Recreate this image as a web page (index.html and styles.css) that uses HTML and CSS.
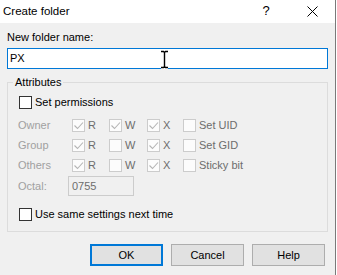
FILE: index.html
```html
<!DOCTYPE html>
<html lang="en">

<head>
    <meta charset="UTF-8">
    <meta name="viewport" content="width=device-width, initial-scale=1.0">
    <title>Create folder</title>
    <link rel="stylesheet" href="styles.css">
</head>

<body>
    <div class="window">
        <div class="titlebar">
            <span class="title">Create folder</span>
            <span class="caption-btn help-btn">?</span>
            <span class="caption-btn close-btn">
                <svg width="11" height="11" viewBox="0 0 11 11">
                    <path d="M0.5 0.5L10.5 10.5M10.5 0.5L0.5 10.5" stroke="#000" stroke-width="1" fill="none" />
                </svg>
            </span>
        </div>

        <div class="content">
            <div class="name-label">New folder name:</div>
            <div class="name-field">
                <div class="textbox">PX</div>
                <!-- mouse cursor over the text box -->
                <svg class="ibeam" width="9" height="19" viewBox="0 0 9 19">
                    <path d="M1 1.5h2.5l1 1 1-1H8M4.5 2.5v14M1 17.5h2.5l1-1 1 1H8" stroke="#fff" stroke-width="3" fill="none" />
                    <path d="M1 1.5h2.5l1 1 1-1H8M4.5 2.5v14M1 17.5h2.5l1-1 1 1H8" stroke="#000" stroke-width="1.4" fill="none" />
                </svg>
            </div>

            <fieldset class="group">
                <legend>Attributes</legend>

                <div class="check-row perms">
                    <span class="box"></span>Set permissions
                </div>

                <div class="perm-grid">
                    <span class="dim">Owner</span>
                    <span class="cb"><span class="box off on"></span>R</span>
                    <span class="cb"><span class="box off on"></span>W</span>
                    <span class="cb"><span class="box off on"></span>X</span>
                    <span class="cb"><span class="box off"></span>Set UID</span>

                    <span class="dim">Group</span>
                    <span class="cb"><span class="box off on"></span>R</span>
                    <span class="cb"><span class="box off"></span>W</span>
                    <span class="cb"><span class="box off on"></span>X</span>
                    <span class="cb"><span class="box off"></span>Set GID</span>

                    <span class="dim">Others</span>
                    <span class="cb"><span class="box off on"></span>R</span>
                    <span class="cb"><span class="box off"></span>W</span>
                    <span class="cb"><span class="box off on"></span>X</span>
                    <span class="cb"><span class="box off"></span>Sticky bit</span>
                </div>

                <div class="octal-row">
                    <span class="dim octal-label">Octal:</span>
                    <div class="octal">0755</div>
                </div>

                <div class="check-row same">
                    <span class="box"></span>Use same settings next time
                </div>
            </fieldset>

            <div class="buttons">
                <button class="btn default">OK</button>
                <button class="btn">Cancel</button>
                <button class="btn">Help</button>
            </div>
        </div>
    </div>
</body>

</html>
```

FILE: styles.css
```css
* {
    margin: 0;
    padding: 0;
    box-sizing: border-box;
}

html,
body {
    height: 100%;
    background: #fff;
}

body {
    overflow: hidden;
    font-family: "Liberation Sans", Arial, sans-serif;
    font-size: 11px;
    color: #000;
}

.window {
    width: 336px;
    height: 275px;
    border-right: 1px solid #7a7a7a;
    display: flex;
    flex-direction: column;
}

/* title bar */
.titlebar {
    height: 23px;
    display: flex;
    align-items: center;
    background: #fff;
}

.title {
    flex: 1;
    padding: 0 0 2px 3px;
    font-size: 11.5px;
}

.caption-btn {
    width: 46px;
    height: 23px;
    display: flex;
    align-items: center;
    justify-content: center;
}

.help-btn {
    font-size: 13px;
    padding-bottom: 2px;
}

.close-btn svg {
    display: block;
    margin-bottom: 1px;
}

/* dialog body */
.content {
    flex: 1;
    background: #f0f0f0;
    padding: 6px 7px 0 7px;
}

.name-label {
    height: 16px;
    line-height: 16px;
    margin-bottom: 3px;
}

.name-field {
    position: relative;
}

.textbox {
    height: 21px;
    border: 1px solid #0078d7;
    background: #fff;
    padding-left: 2px;
    line-height: 19px;
}

.ibeam {
    position: absolute;
    left: 153px;
    top: 2px;
}

/* group box */
.group {
    margin-top: 6px;
    min-width: 0;
    border: 1px solid #dcdcdc;
    padding: 2px 10px 7px 10px;
}

.group legend {
    margin-left: -5px;
    padding: 0 2px;
    line-height: 15px;
}

.check-row {
    height: 20px;
    display: flex;
    align-items: center;
    gap: 3px;
}

.check-row.perms {
    margin-left: 1px;
}

.check-row.same {
    margin-left: 1px;
    margin-top: 8px;
}

.box {
    width: 13px;
    height: 13px;
    border: 1px solid #333;
    background: #fff;
    flex: none;
}

.box.off {
    border-color: #cccccc;
    background: #fcfcfc;
}

.box.on {
    background: #fcfcfc url("data:image/svg+xml,%3Csvg xmlns='http://www.w3.org/2000/svg' width='11' height='11'%3E%3Cpath d='M1.5 5.5l3 3 5.5-6' stroke='%23b4b4b4' stroke-width='1.1' fill='none'/%3E%3C/svg%3E") no-repeat center;
}

.perm-grid {
    margin-top: 3px;
    display: grid;
    grid-template-columns: 54px 37px 38px 36px auto;
    grid-auto-rows: 20px;
    align-items: center;
}

.dim {
    color: #a0a0a0;
}

.cb {
    display: flex;
    align-items: center;
    gap: 3px;
    color: #6d6d6d;
}

.octal-row {
    margin-top: 1px;
    display: flex;
    align-items: center;
}

.octal-label {
    width: 50px;
}

.octal {
    width: 66px;
    height: 20px;
    border: 1px solid #cccccc;
    background: #f0f0f0;
    color: #6d6d6d;
    padding-left: 3px;
    line-height: 18px;
}

/* dialog buttons */
.buttons {
    margin-top: 12px;
    padding-right: 3px;
    display: flex;
    justify-content: flex-end;
    gap: 8px;
}

.btn {
    width: 73px;
    height: 22px;
    border: 1px solid #adadad;
    background: #e1e1e1;
    font-family: inherit;
    font-size: 11px;
    color: #000;
}

.btn.default {
    border: 2px solid #0078d7;
}
```
